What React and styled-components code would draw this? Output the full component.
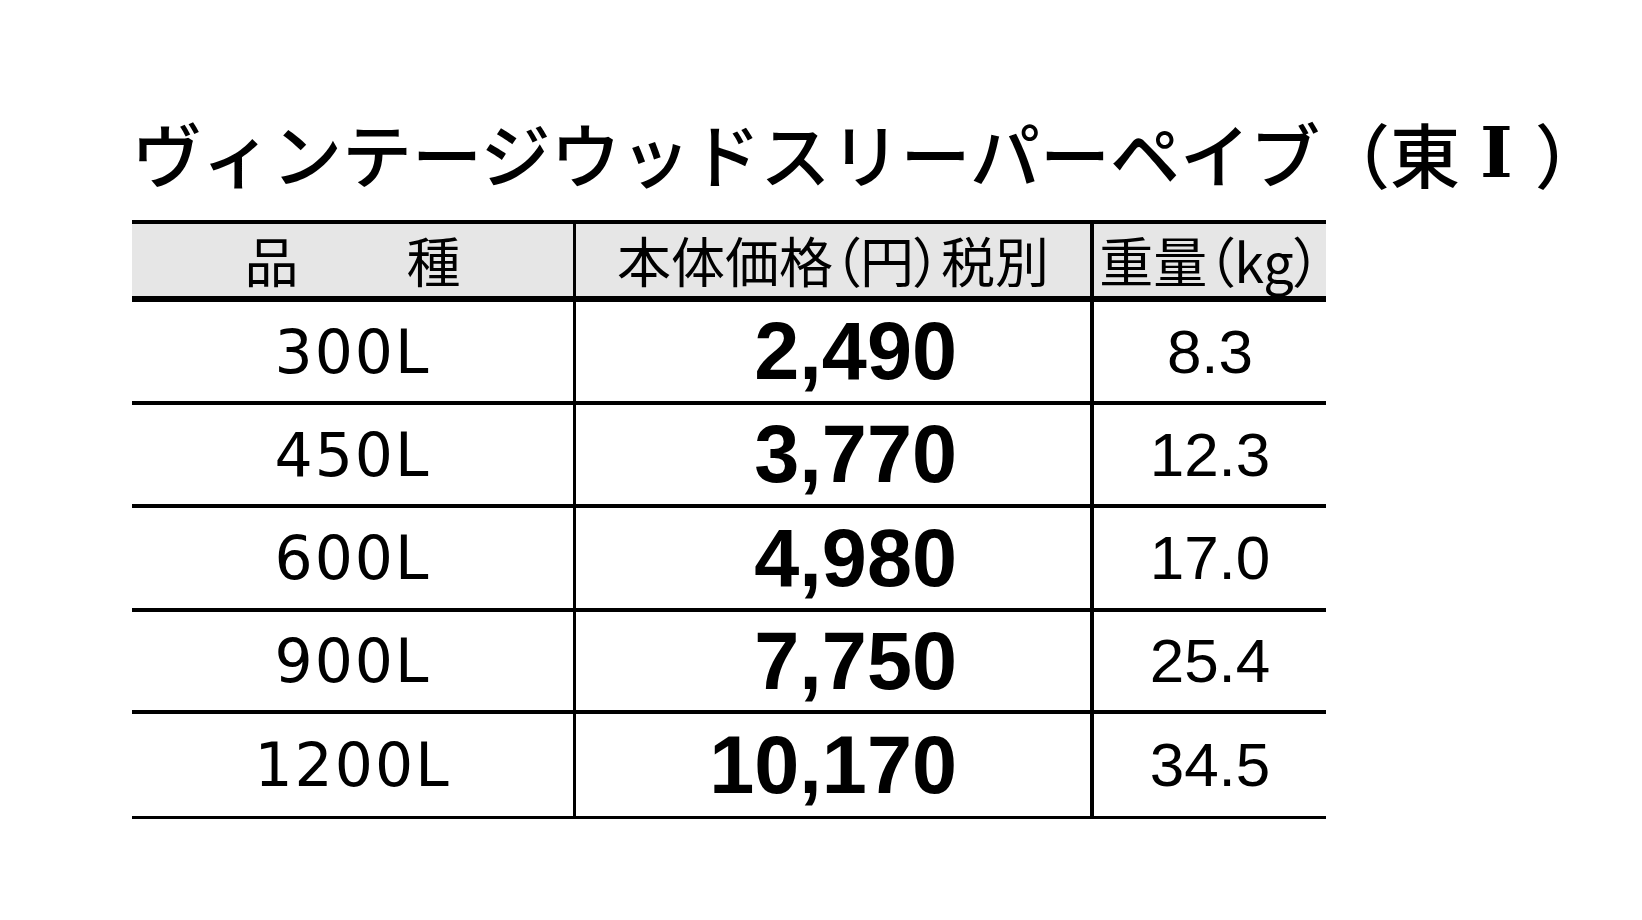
import React from "react";
import styled, { createGlobalStyle } from "styled-components";

const GlobalStyle = createGlobalStyle`
  html, body {
    margin: 0;
    padding: 0;
    background: #ffffff;
  }
  body {
    font-family: "Noto Sans CJK JP", "Noto Sans", sans-serif;
    color: #000000;
  }
`;

const Page = styled.div`
  width: 1642px;
  height: 920px;
  box-sizing: border-box;
  padding: 118px 0 0 132px;
  background: #ffffff;
`;

const Title = styled.h1`
  margin: 0 0 32px 0;
  height: 70px;
  font-family: "Noto Sans CJK JP", sans-serif;
  font-weight: 500;
  font-size: 70px;
  line-height: 70px;
  white-space: nowrap;
  color: #000000;
`;

const Numeral = styled.span`
  font-family: "DejaVu Serif", "Liberation Serif", "Noto Sans CJK JP", serif;
  font-weight: 700;
  line-height: 70px;
  vertical-align: top;
  display: inline-block;
  padding: 0 22px 0 20px;
`;

const Table = styled.div`
  width: 1194px;
  border-top: 4px solid #000000;
`;

const Row = styled.div`
  display: grid;
  grid-template-columns: 444px 518px 232px;
  height: ${(p) => p.$h}px;
  border-bottom: ${(p) => p.$line}px solid #000000;
  background: ${(p) => (p.$head ? "#e6e6e6" : "#ffffff")};
`;

const Cell = styled.div`
  display: flex;
  align-items: center;
  justify-content: center;
  box-sizing: border-box;
  border-right: ${(p) => p.$rule || 0}px solid #000000;
  white-space: nowrap;
`;

const HeadText = styled.span`
  font-family: "Noto Sans CJK JP", sans-serif;
  font-weight: 400;
  font-size: 54px;
  line-height: 1;
  font-feature-settings: "palt";
`;

const NameText = styled.span`
  font-family: "DejaVu Sans", sans-serif;
  font-size: 60px;
  letter-spacing: 2px;
  line-height: 1;
`;

const PriceCell = styled(Cell)`
  justify-content: flex-end;
  padding-right: 133px;
`;

const PriceText = styled.span`
  font-family: "Liberation Sans", Arial, sans-serif;
  font-weight: 700;
  font-size: 81px;
  line-height: 1;
`;

const WeightText = styled.span`
  font-family: "Liberation Sans", Arial, sans-serif;
  font-size: 62px;
  line-height: 1;
`;

const rows = [
  { name: "300L", price: "2,490", weight: "8.3", h: 99 },
  { name: "450L", price: "3,770", weight: "12.3", h: 99 },
  { name: "600L", price: "4,980", weight: "17.0", h: 100 },
  { name: "900L", price: "7,750", weight: "25.4", h: 98 },
  { name: "1200L", price: "10,170", weight: "34.5", h: 102 },
];

export default function App() {
  return (
    <>
      <GlobalStyle />
      <Page>
        <Title>
          ヴィンテージウッドスリーパーペイブ（東<Numeral>Ⅰ</Numeral>）
        </Title>
        <Table>
          <Row $head $h={72} $line={6}>
            <Cell $rule={3}>
              <HeadText>品　　種</HeadText>
            </Cell>
            <Cell $rule={4}>
              <HeadText>本体価格（円）税別</HeadText>
            </Cell>
            <Cell>
              <HeadText>重量（kg）</HeadText>
            </Cell>
          </Row>
          {rows.map((r, i) => (
            <Row key={r.name} $h={r.h} $line={i === rows.length - 1 ? 3 : 4}>
              <Cell $rule={3}>
                <NameText>{r.name}</NameText>
              </Cell>
              <PriceCell $rule={4}>
                <PriceText>{r.price}</PriceText>
              </PriceCell>
              <Cell>
                <WeightText>{r.weight}</WeightText>
              </Cell>
            </Row>
          ))}
        </Table>
      </Page>
    </>
  );
}
